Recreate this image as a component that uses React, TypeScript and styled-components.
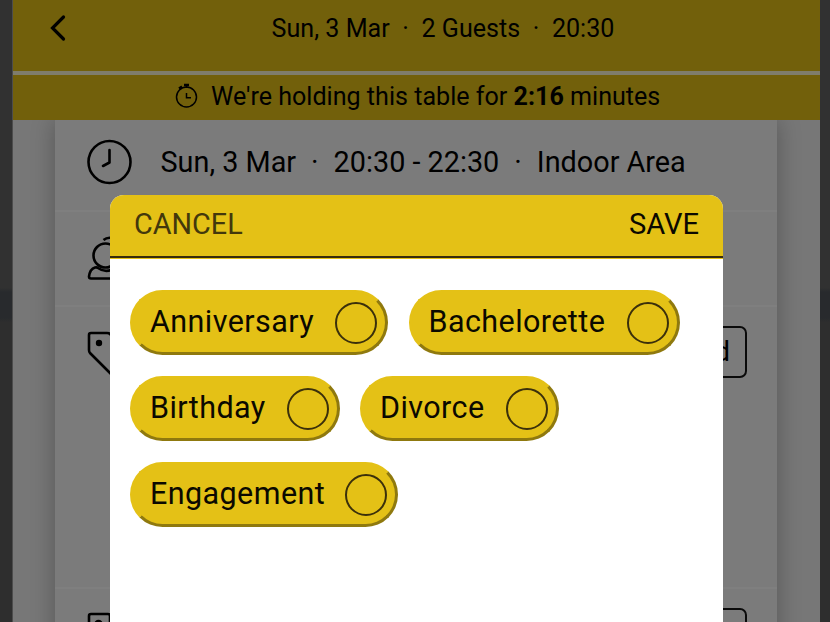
import React from "react";
import styled, { createGlobalStyle } from "styled-components";

const yellow = "#e4c116";

const GlobalStyle = createGlobalStyle`
  * { box-sizing: border-box; }
  body { margin: 0; overflow: hidden; font-family: Roboto, sans-serif; color: #000; }
`;

const Page = styled.div`
  position: relative;
  height: 622px;
  overflow: hidden;
  padding: 0 10px 0 12px;
  background: linear-gradient(#626262 0 288px, #50555b 292px 318px, #5c5c5c 322px 100%);
`;

const Booking = styled.div`
  height: 622px;
  display: flex;
  flex-direction: column;
  background: #eeeeee;
  border-left: 1px solid #999;
`;

const TopBar = styled.header`
  height: 74.5px;
  flex: none;
  display: grid;
  grid-template-columns: 100px 1fr 100px;
  background: ${yellow};
  border-bottom: 4px solid #fffbd8;
  font-size: 25.1px;
  line-height: 58px;
`;

const BackButton = styled.button`
  height: 56px;
  border: 0;
  padding: 0 0 0 35px;
  background: none;
  text-align: left;
  svg { display: block; }
`;

const Summary = styled.div`
  display: flex;
  gap: 12.6px;
  justify-content: center;
  padding-left: 53px;
  white-space: nowrap;
`;

const HoldBar = styled.div`
  height: 45.5px;
  flex: none;
  display: flex;
  align-items: center;
  padding: 0 0 2px 161px;
  gap: 11px;
  background: ${yellow};
  font-size: 25.1px;
  line-height: 43px;
  white-space: pre;
  svg { margin-bottom: 2px; }
`;

const Card = styled.main`
  flex: 1;
  margin: 0 43px 0 42px;
  display: flex;
  flex-direction: column;
  background: #f7f7f7;
  box-shadow: 0 0 22px rgba(0, 0, 0, 0.28);
  clip-path: inset(0 -43px 0 -43px);
`;

const Section = styled.section<{ $height: number }>`
  height: ${(p) => p.$height}px;
  flex: none;
  display: flex;
  justify-content: space-between;
  align-items: flex-start;
  padding: 19px 30px 0 32px;
  border-bottom: 2px solid #fff;
`;

const Details = styled.div`
  flex: 1;
  display: flex;
  gap: 15px;
  padding: 1px 0 0 27.5px;
  font-size: 28.8px;
  line-height: 45px;
  white-space: nowrap;
`;

const AddButton = styled.button`
  width: 90px;
  height: 52px;
  border: 2px solid #141414;
  border-radius: 7px;
  padding: 0 15px;
  background: none;
  color: #000;
  font: 28px/46px Roboto, sans-serif;
  text-align: right;
`;

const Backdrop = styled.div`
  position: absolute;
  inset: 0;
  background: rgba(0, 0, 0, 0.5);
`;

const Dialog = styled.div`
  position: absolute;
  left: 110px;
  top: 194.5px;
  width: 613px;
  height: 440px;
  overflow: hidden;
  border-radius: 14px 14px 0 0;
  background: #fff;
`;

const DialogBar = styled.div`
  height: 64.5px;
  display: flex;
  justify-content: space-between;
  padding: 0 24px;
  background: linear-gradient(${yellow} 0 61.3px, #382c0b 61.3px 63px, ${yellow} 63px 64.5px);
`;

const Action = styled.button<{ $muted?: boolean }>`
  border: 0;
  padding: 0;
  background: none;
  height: 59px;
  color: ${(p) => (p.$muted ? "#43380c" : "#0b0900")};
  font: ${(p) => (p.$muted ? 28.8 : 29.1)}px/59px Roboto, sans-serif;
`;

const Tags = styled.div`
  display: flex;
  flex-wrap: wrap;
  gap: 21px 20.5px;
  padding: 31px 20px;
`;

const Tag = styled.button<{ $width: number }>`
  width: ${(p) => p.$width}px;
  height: 65px;
  display: flex;
  align-items: center;
  justify-content: space-between;
  padding: 0 8px 0 17px;
  border: 3px solid;
  border-color: ${yellow} #8f790e #8f790e ${yellow};
  border-radius: 33px;
  background: ${yellow};
  color: #0b0900;
  font: 30.5px/58px Roboto, sans-serif;
  letter-spacing: 0.42px;
`;

const Label = styled.span`
  height: 60px;
`;

const Radio = styled.span`
  width: 42px;
  height: 42px;
  border: 2px solid #3b300b;
  border-radius: 50%;
`;

const tags = [
  { label: "Anniversary", width: 258 },
  { label: "Bachelorette", width: 271.5 },
  { label: "Birthday", width: 209.5 },
  { label: "Divorce", width: 198.5 },
  { label: "Engagement", width: 268 },
];

const ChevronIcon = () => (
  <svg width="18" height="28" viewBox="0 0 18 28" fill="none" stroke="#000" strokeWidth="3.2">
    <path d="M15.5 3 4.5 14 15.5 25" strokeLinecap="round" />
  </svg>
);

const StopwatchIcon = () => (
  <svg width="26" height="28" viewBox="0 0 26 28" fill="none" stroke="#000" strokeWidth="1.5">
    <circle cx="12.5" cy="16" r="10" />
    <path d="M12.5 12v4.8h4.5M12.5 4v3" />
    <path d="M10 4h5M5 7.5l3-2" strokeWidth="2.4" />
  </svg>
);

const ClockIcon = () => (
  <svg width="46" height="46" viewBox="0 0 46 46" fill="none" stroke="#000" strokeWidth="2.6">
    <circle cx="22.5" cy="23" r="21" />
    <path d="M22.5 11v12.5l-6.5 3.5" strokeLinecap="round" strokeLinejoin="round" />
  </svg>
);

const GuestsIcon = () => (
  <svg width="46" height="52" viewBox="0 0 46 52" fill="none" stroke="#000" strokeWidth="2.6" strokeLinejoin="round">
    <circle cx="18.5" cy="24.500" r="12" />
    <path d="M16.500 9C20 6 27 5 31 12" />
    <path d="M8 36.500Q3 38 2 45.500q0 2 2 2h32v-5q-2-6-6-7-10 8-19 1.500-1-1-3-.5Z" />
  </svg>
);

const TagIcon = () => (
  <svg width="46" height="52" viewBox="0 -5 46 52" fill="none" stroke="#000" strokeWidth="2.6" strokeLinejoin="round">
    <path d="M4 2h16q2 0 3 1l21 21-18 21L3 22Q2 21 2 19V4Q2 2 4 2Z" />
    <circle cx="12" cy="12" r="3.2" fill="#000" stroke="none" />
  </svg>
);

const NoteIcon = () => (
  <svg width="46" height="48" viewBox="0 -3 46 48" fill="none" stroke="#000" strokeWidth="2.6">
    <rect x="2" y="3" width="21" height="40" rx="2" />
    <circle cx="11.5" cy="13" r="3" />
  </svg>
);

export default function App() {
  return (
    <>
      <GlobalStyle />
      <Page>
        <Booking>
          <TopBar>
            <BackButton aria-label="Back"><ChevronIcon /></BackButton>
            <Summary>
              <span>Sun, 3 Mar</span><span>·</span><span>2 Guests</span><span>·</span><span>20:30</span>
            </Summary>
          </TopBar>
          <HoldBar>
            <StopwatchIcon />
            <span>We're holding this table for <b>2:16</b> minutes</span>
          </HoldBar>
          <Card>
            <Section $height={92}>
              <ClockIcon />
              <Details>
                <span>Sun, 3 Mar</span><span>·</span><span>20:30 - 22:30</span><span>·</span><span>Indoor Area</span>
              </Details>
            </Section>
            <Section $height={95}><GuestsIcon /></Section>
            <Section $height={282}>
              <TagIcon />
              <AddButton>Add</AddButton>
            </Section>
            <Section $height={120}>
              <NoteIcon />
              <AddButton>Add</AddButton>
            </Section>
          </Card>
        </Booking>
        <Backdrop />
        <Dialog role="dialog">
          <DialogBar>
            <Action $muted>CANCEL</Action>
            <Action>SAVE</Action>
          </DialogBar>
          <Tags>
            {tags.map((t) => (
              <Tag key={t.label} $width={t.width}>
                <Label>{t.label}</Label>
                <Radio />
              </Tag>
            ))}
          </Tags>
        </Dialog>
      </Page>
    </>
  );
}
